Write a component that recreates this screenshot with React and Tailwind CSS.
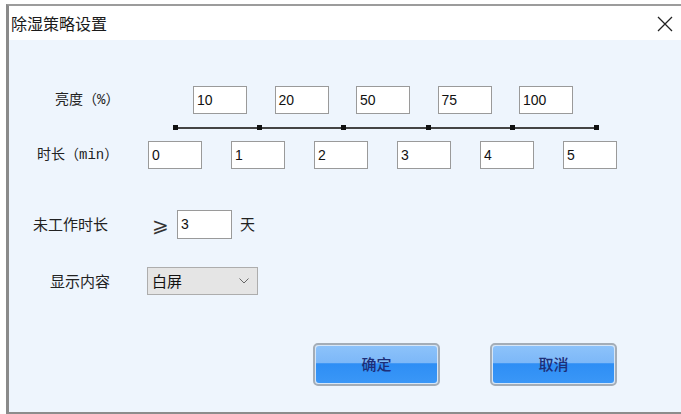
import React from "react";

const cjk = "font-['Noto_Sans_CJK_SC',sans-serif]";
const labelFont = "font-['Liberation_Mono','Noto_Sans_CJK_SC',monospace]";

const brightness = ["10", "20", "50", "75", "100"];
const durations = ["0", "1", "2", "3", "4", "5"];

const NumBox = ({ value, w = "w-[54px]", h = "h-[28px]" }) => (
  <div
    className={`${w} ${h} shrink-0 bg-white border border-[#9a9a9a] flex items-center pl-[3px] text-[14px] text-[#111] font-['Liberation_Sans',sans-serif]`}
  >
    {value}
  </div>
);

const BlueButton = ({ children }) => (
  <button className="w-[127px] h-[43px] rounded-[5px] border-2 border-[#a4adb7] p-[1px] bg-[#d6e6f7]">
    <div className="h-full w-full rounded-[3px] bg-[linear-gradient(to_bottom,#8cc2fa_0%,#7db8f8_45%,#2e8ef5_48%,#3a97f7_100%)] flex items-center justify-center">
      <span className={`${cjk} text-[15px] font-medium text-[#1d2e78]`}>{children}</span>
    </div>
  </button>
);

export default function App() {
  return (
    <div className="w-[681px] h-[414px] bg-white pt-[4px] pl-[6px] overflow-hidden">
      <div className="h-[410px] flex flex-col border-t-2 border-t-[#9c9c9c] border-l-[3px] border-l-[#8a8a8a] border-b-2 border-b-[#8c8c8c]">
        {/* Title bar */}
        <div className="h-[34px] shrink-0 bg-white flex items-center justify-between pl-[2px] pr-[8px]">
          <span className={`${cjk} text-[16px] text-[#1a1a1a]`}>除湿策略设置</span>
          <svg width="16" height="16" viewBox="0 0 16 16" className="mt-[1px]">
            <path d="M1 1L15 15M15 1L1 15" stroke="#222" strokeWidth="1.3" fill="none" />
          </svg>
        </div>

        {/* Body */}
        <div className="flex-1 bg-[#eef5fd] flex flex-col">
          {/* Brightness */}
          <div className="flex items-center mt-[46px] pl-[46px]">
            <div className={`w-[138px] ${labelFont} text-[14px] text-[#222]`}>亮度（%）</div>
            <div className="flex gap-[27.5px]">
              {brightness.map((v) => (
                <NumBox key={v} value={v} />
              ))}
            </div>
          </div>

          {/* Slider */}
          <div className="h-[27px] flex items-center ml-[164px] w-[426px]">
            <div className="relative w-full h-[5px] flex items-center justify-between">
              <div className="absolute left-[2px] right-[2px] top-[2px] h-[2px] bg-[#444]" />
              {durations.map((d) => (
                <div key={d} className="relative w-[5px] h-[5px] bg-[#111]" />
              ))}
            </div>
          </div>

          {/* Duration */}
          <div className="flex items-center pl-[28px]">
            <div className={`w-[111px] ${labelFont} text-[14px] text-[#222]`}>时长（min）</div>
            <div className="flex gap-[29px]">
              {durations.map((v) => (
                <NumBox key={v} value={v} />
              ))}
            </div>
          </div>

          {/* Idle time */}
          <div className="flex items-center mt-[41px] pl-[24px]">
            <div className={`w-[119px] ${cjk} text-[15px] text-[#222]`}>未工作时长</div>
            <span className="w-[16px] text-[20px] leading-none text-[#333] font-['DejaVu_Sans',sans-serif]">⩾</span>
            <div className="ml-[9px]">
              <NumBox value="3" w="w-[55px]" h="h-[29px]" />
            </div>
            <span className={`ml-[8px] ${cjk} text-[15px] text-[#222]`}>天</span>
          </div>

          {/* Display content */}
          <div className="flex items-center mt-[28px] pl-[41px]">
            <div className={`w-[97px] ${cjk} text-[15px] text-[#222]`}>显示内容</div>
            <div className="w-[111px] h-[28px] bg-[#e5e5e5] border border-[#adadad] flex items-center justify-between pl-[4px] pr-[8px]">
              <span className={`${cjk} text-[15px] text-[#111]`}>白屏</span>
              <svg width="10" height="6" viewBox="0 0 10 6">
                <path d="M0.5 0.5L5 5L9.5 0.5" stroke="#666" strokeWidth="1" fill="none" />
              </svg>
            </div>
          </div>

          {/* Buttons */}
          <div className="flex mt-[48px] pl-[304px] gap-[50px]">
            <BlueButton>确定</BlueButton>
            <BlueButton>取消</BlueButton>
          </div>
        </div>
      </div>
    </div>
  );
}
